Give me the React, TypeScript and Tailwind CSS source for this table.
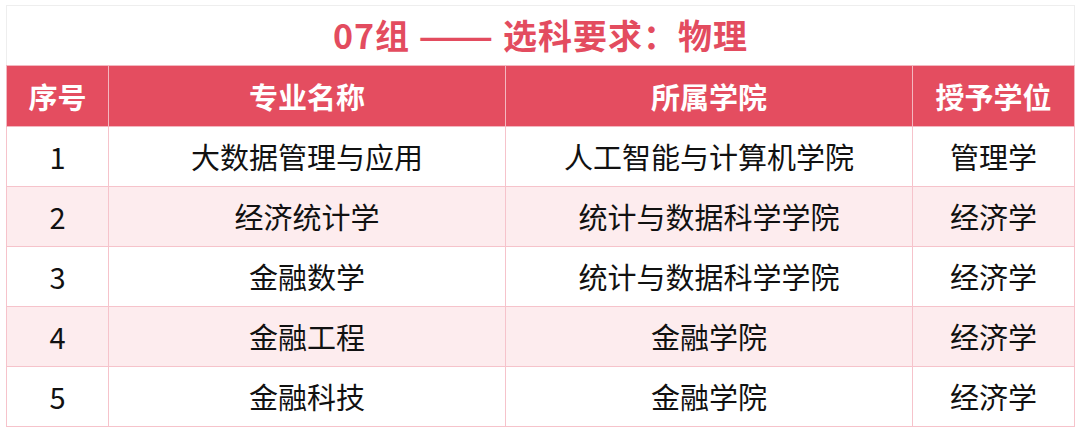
const ROWS = [
  { no: "1", major: "大数据管理与应用", school: "人工智能与计算机学院", degree: "管理学" },
  { no: "2", major: "经济统计学", school: "统计与数据科学学院", degree: "经济学" },
  { no: "3", major: "金融数学", school: "统计与数据科学学院", degree: "经济学" },
  { no: "4", major: "金融工程", school: "金融学院", degree: "经济学" },
  { no: "5", major: "金融科技", school: "金融学院", degree: "经济学" },
];

const FONT = "font-['Noto_Sans_CJK_SC','Noto_Sans',sans-serif]";

export default function App() {
  return (
    <div className={`w-[1080px] h-[433px] bg-white pt-[5px] pl-[6px] ${FONT}`}>
      <div className="w-[1069px]">
        {/* Title */}
        <div className="h-[60px] border border-b-0 border-[#eeeeee] flex items-center justify-center pb-[2px]">
          <h1 className="flex items-center text-[34px] font-bold tracking-[1px] text-[#e34c5f] leading-none">
            <span>07组</span>
            <span className="inline-block w-[75px] mx-[9px] text-center">
              <span className="inline-block scale-x-[1.3]">——</span>
            </span>
            <span>选科要求：物理</span>
          </h1>
        </div>

        <table className="w-full border-collapse table-fixed">
          <colgroup>
            <col className="w-[102px]" />
            <col className="w-[397px]" />
            <col className="w-[407px]" />
            <col />
          </colgroup>
          <thead>
            <tr className="h-[61px] bg-[#e44d60] text-white">
              {["序号", "专业名称", "所属学院", "授予学位"].map((h) => (
                <th
                  key={h}
                  className="border border-[#f3b7c0] text-[29px] font-bold leading-none text-center"
                >
                  {h}
                </th>
              ))}
            </tr>
          </thead>
          <tbody>
            {ROWS.map((r, i) => (
              <tr key={r.no} className={`h-[60px] ${i % 2 === 1 ? "bg-[#fdecee]" : "bg-white"}`}>
                {[r.no, r.major, r.school, r.degree].map((c, j) => (
                  <td
                    key={j}
                    className="border border-[#f6c3cb] text-[29px] text-[#111111] leading-none text-center"
                  >
                    {c}
                  </td>
                ))}
              </tr>
            ))}
          </tbody>
        </table>
      </div>
    </div>
  );
}
